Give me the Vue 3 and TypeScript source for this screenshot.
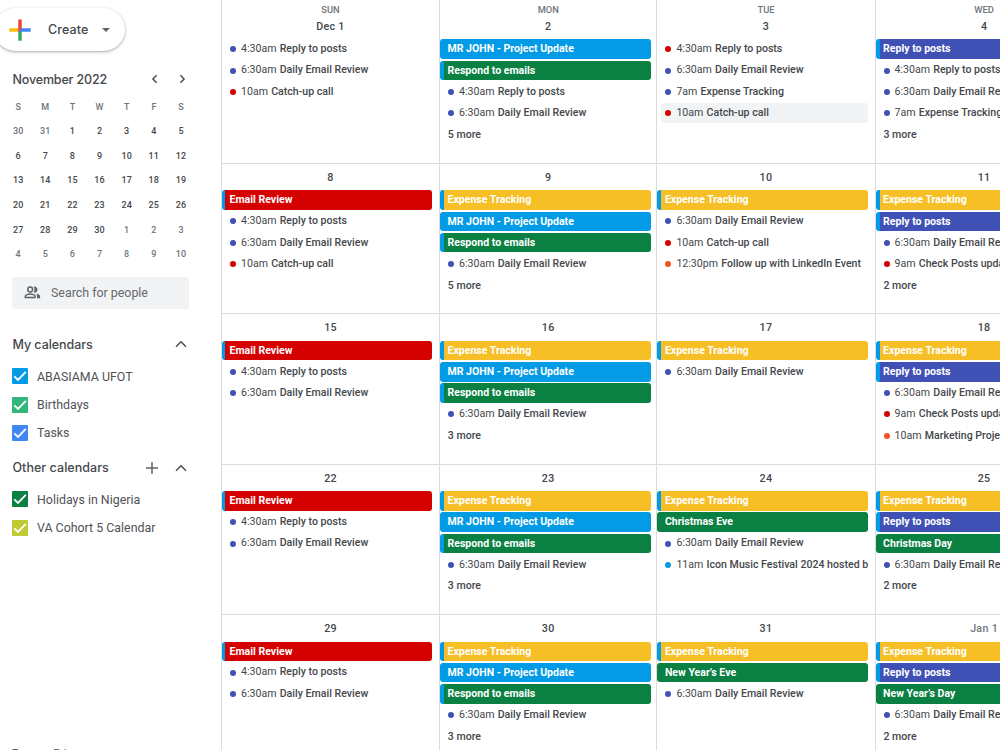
<script setup lang="ts">
type Tone = 'blue' | 'green' | 'indigo' | 'red' | 'yellow' | 'orange'

interface CalendarEvent {
  kind: 'bar' | 'timed'
  title: string
  tone: Tone
  time?: string
  striped?: boolean
  hovered?: boolean
}

interface DayCell {
  label: string
  events: CalendarEvent[]
  more?: number
  faded?: boolean
}

const bar = (title: string, tone: Tone, striped = true): CalendarEvent => ({ kind: 'bar', title, tone, striped })
const timed = (time: string, title: string, tone: Tone = 'indigo', hovered = false): CalendarEvent => ({
  kind: 'timed', time, title, tone, hovered,
})

const expense = bar('Expense Tracking', 'yellow')
const project = bar('MR JOHN - Project Update', 'blue')
const respond = bar('Respond to emails', 'green')
const review = bar('Email Review', 'red')
const reply = bar('Reply to posts', 'indigo')
const replyTimed = timed('4:30am', 'Reply to posts')
const daily = timed('6:30am', 'Daily Email Review')
const catchUp = timed('10am', 'Catch-up call', 'red')

const weekdays: string[] = ['SUN', 'MON', 'TUE', 'WED']

const weeks: DayCell[][] = [
  [
    { label: 'Dec 1', events: [replyTimed, daily, catchUp] },
    { label: '2', events: [project, respond, replyTimed, daily], more: 5 },
    {
      label: '3',
      events: [
        timed('4:30am', 'Reply to posts', 'red'),
        daily,
        timed('7am', 'Expense Tracking'),
        timed('10am', 'Catch-up call', 'red', true),
      ],
    },
    { label: '4', events: [reply, replyTimed, daily, timed('7am', 'Expense Tracking')], more: 3 },
  ],
  [
    { label: '8', events: [review, replyTimed, daily, catchUp] },
    { label: '9', events: [expense, project, respond, daily], more: 5 },
    { label: '10', events: [expense, daily, catchUp, timed('12:30pm', 'Follow up with LinkedIn Event', 'orange')] },
    { label: '11', events: [expense, reply, daily, timed('9am', 'Check Posts updates', 'red')], more: 2 },
  ],
  [
    { label: '15', events: [review, replyTimed, daily] },
    { label: '16', events: [expense, project, respond, daily], more: 3 },
    { label: '17', events: [expense, daily] },
    {
      label: '18',
      events: [expense, reply, daily, timed('9am', 'Check Posts updates', 'red'), timed('10am', 'Marketing Project', 'orange')],
    },
  ],
  [
    { label: '22', events: [review, replyTimed, daily] },
    { label: '23', events: [expense, project, respond, daily], more: 3 },
    {
      label: '24',
      events: [expense, bar('Christmas Eve', 'green', false), daily, timed('11am', 'Icon Music Festival 2024 hosted by', 'blue')],
    },
    { label: '25', events: [expense, reply, bar('Christmas Day', 'green', false), daily], more: 2 },
  ],
  [
    { label: '29', events: [review, replyTimed, daily] },
    { label: '30', events: [expense, project, respond, daily], more: 3 },
    { label: '31', events: [expense, bar('New Year’s Eve', 'green', false), daily] },
    { label: 'Jan 1', faded: true, events: [expense, reply, bar('New Year’s Day', 'green', false), daily], more: 2 },
  ],
]

const miniHeads: string[] = ['S', 'M', 'T', 'W', 'T', 'F', 'S']
const miniDays = Array.from({ length: 42 }, (_, i) => {
  const n = i - 1
  if (n < 1) return { n: n + 31, out: true }
  if (n > 30) return { n: n - 30, out: true }
  return { n, out: false }
})

const myCalendars = [
  { name: 'ABASIAMA UFOT', color: '#039be5' },
  { name: 'Birthdays', color: '#33b679' },
  { name: 'Tasks', color: '#4285f4' },
]
const otherCalendars = [
  { name: 'Holidays in Nigeria', color: '#0b8043' },
  { name: 'VA Cohort 5 Calendar', color: '#c0ca33' },
]
</script>

<template>
  <div class="page">
    <aside class="sidebar">
      <button class="create">
        <svg class="plus" viewBox="0 0 22 22">
          <path d="M9.3 0.5h3.4v8.8L9.3 12.7z" fill="#ea4335" />
          <path d="M9.3 9.3v3.4H0.3V9.3z" fill="#fbbc04" />
          <path d="M9.3 12.7L12.7 9.3v12.4H9.3z" fill="#34a853" />
          <path d="M12.7 9.3h9v3.4H9.3z" fill="#4285f4" />
          <path d="M9.3 9.3h3.4L9.3 12.7z" fill="#ea4335" />
        </svg>
        <span class="create-text">Create</span>
        <svg class="caret" viewBox="0 0 8 4"><path d="M0 0h8L4 4z" fill="#5f6368" /></svg>
      </button>

      <div class="mini-title">
        <span class="heading">November 2022</span>
        <svg class="arrow" viewBox="0 0 10 10"><path d="M6.6 1.2L2.9 5l3.7 3.8" /></svg>
        <svg class="arrow" viewBox="0 0 10 10"><path d="M3.4 1.2L7.1 5 3.4 8.8" /></svg>
      </div>
      <div class="mini">
        <span v-for="(h, i) in miniHeads" :key="'h' + i" class="mini-head">{{ h }}</span>
        <span v-for="(d, i) in miniDays" :key="i" class="mini-day" :class="{ out: d.out }">{{ d.n }}</span>
      </div>

      <div class="search">
        <svg class="people" viewBox="0 0 18 14">
          <g fill="none" stroke="#5f6368" stroke-width="1.6">
            <circle cx="6.5" cy="3.8" r="2.6" />
            <path d="M1.3 12.3v-1.2c0-1.5 3-2.5 5.2-2.5s5.2 1 5.2 2.5v1.2z" />
          </g>
          <path d="M10.2 0.6c2-.7 4.2.9 4.2 3.2s-2.2 3.9-4.2 3.2c1.3-1.9 1.3-4.5 0-6.4zM13 8.1c2 .4 4.2 1.4 4.2 3.1v1.9h-3.3v-1.9c0-1.3-.4-2.3-.9-3.1z" fill="#5f6368" />
        </svg>
        <span>Search for people</span>
      </div>

      <div class="section first">
        <span class="heading">My calendars</span>
        <svg class="chev" viewBox="0 0 12 8"><path d="M1 6.7L6 1.7l5 5" /></svg>
      </div>
      <div v-for="c in myCalendars" :key="c.name" class="cal">
        <svg class="check" viewBox="0 0 16 16">
          <rect width="16" height="16" rx="1" :fill="c.color" />
          <path d="M2.3 8.3l3.7 3.6 7.8-8" />
        </svg>
        <span>{{ c.name }}</span>
      </div>
      <div class="section second">
        <span class="heading">Other calendars</span>
        <svg class="add" viewBox="0 0 12 12"><path d="M6 0v12M0 6h12" /></svg>
        <svg class="chev" viewBox="0 0 12 8"><path d="M1 6.7L6 1.7l5 5" /></svg>
      </div>
      <div v-for="c in otherCalendars" :key="c.name" class="cal">
        <svg class="check" viewBox="0 0 16 16">
          <rect width="16" height="16" rx="1" :fill="c.color" />
          <path d="M2.3 8.3l3.7 3.6 7.8-8" />
        </svg>
        <span>{{ c.name }}</span>
      </div>
      <div class="footer">Terms – Privacy</div>
    </aside>

    <main class="month">
      <section v-for="(week, w) in weeks" :key="w" class="week" :class="{ top: w === 0 }">
        <div v-for="(day, d) in week" :key="d" class="day">
          <div v-if="w === 0" class="weekday">{{ weekdays[d] }}</div>
          <div class="date" :class="{ faded: day.faded }">{{ day.label }}</div>
          <div class="events">
            <template v-for="(e, i) in day.events" :key="i">
              <div v-if="e.kind === 'bar'" class="event bar" :class="[e.tone, { striped: e.striped }]">{{ e.title }}</div>
              <div v-else class="event timed" :class="{ hovered: e.hovered }">
                <i class="dot" :class="e.tone"></i>
                <span class="time">{{ e.time }}</span>
                <span class="name">{{ e.title }}</span>
              </div>
            </template>
            <div v-if="day.more" class="event more">{{ day.more }} more</div>
          </div>
        </div>
      </section>
    </main>
  </div>
</template>

<style>
body {
  overflow: hidden;
  background: #fff;
}
</style>

<style scoped>
.page {
  display: flex;
  width: 1000px;
  height: 750px;
  overflow: hidden;
  font-family: Roboto, "Liberation Sans", sans-serif;
  color: #44474b;
}
.sidebar {
  flex: none;
  width: 221px;
  height: 750px;
  overflow: hidden;
  display: flex;
  flex-direction: column;
}
.sidebar > * {
  flex: none;
}
.create {
  display: flex;
  align-items: center;
  margin: 8px 0 0 -6px;
  width: 131px;
  height: 43px;
  padding: 0 0 0 14.5px;
  border: 0;
  border-radius: 22px;
  background: #fff;
  box-shadow: 0 1px 2px rgba(60, 64, 67, 0.3), 0 1px 3px 1px rgba(60, 64, 67, 0.13);
  color: #44474b;
}
.plus {
  width: 22px;
  height: 22px;
}
.create-text {
  margin-left: 17.5px;
  width: 54px;
  text-align: left;
  font: 500 12.5px Inter, sans-serif;
  letter-spacing: 0.1px;
}
.caret {
  width: 8px;
  height: 4px;
}
.heading {
  font: 500 12.5px Inter, sans-serif;
  letter-spacing: -0.05px;
  flex: 1;
}
.mini-title {
  display: flex;
  align-items: center;
  height: 28px;
  margin: 14px 0 1.5px;
  padding: 0 34px 0 12.5px;
}
.mini-title .heading {
  letter-spacing: -0.16px;
}
.section.second .heading {
  letter-spacing: 0.04px;
}
.arrow {
  width: 10px;
  height: 10px;
  margin-left: 17px;
}
.arrow path,
.chev path {
  fill: none;
  stroke: #4b4e52;
  stroke-width: 1.5;
}
.mini {
  display: grid;
  grid-template-columns: repeat(7, 27.15px);
  grid-auto-rows: 24.65px;
  margin-left: 4.6px;
  text-align: center;
  line-height: 24.5px;
}
.mini-head {
  font-size: 9px;
  font-weight: 500;
  color: #70757a;
}
.mini-day {
  font-size: 9px;
  font-weight: 500;
  letter-spacing: 0.15px;
}
.mini-day.out {
  color: #70757a;
}
.search {
  display: flex;
  align-items: center;
  width: 177px;
  height: 32px;
  margin: 9.8px 0 0 12px;
  padding-left: 12px;
  box-sizing: border-box;
  border-radius: 3px;
  background: #f1f3f4;
  color: #66696e;
  font-size: 12.4px;
}
.people {
  width: 17px;
  height: 13px;
  margin-right: 10px;
}
.section {
  display: flex;
  align-items: center;
  height: 28px;
  padding: 0 34.5px 0 12.5px;
}
.section.first {
  margin: 21.5px 0 4px;
}
.section.second {
  margin: 7px 0 3.5px;
}
.chev {
  width: 12px;
  height: 8px;
}
.add {
  width: 12px;
  height: 12px;
  margin-right: 17px;
}
.add path {
  stroke: #5f6368;
  stroke-width: 1.5;
}
.cal {
  display: flex;
  align-items: center;
  height: 28.2px;
  padding-left: 11.5px;
  font-size: 12.4px;
  color: #505357;
}
.check {
  width: 16px;
  height: 16px;
  margin-right: 9.5px;
}
.check path {
  fill: none;
  stroke: #fff;
  stroke-width: 1.8;
}
.sidebar > .footer {
  margin: auto 0 -11px 12px;
  height: 14px;
  line-height: 14px;
  font-size: 10.5px;
}
.month {
  flex: 1;
  min-width: 0;
  overflow: hidden;
}
.week {
  display: grid;
  grid-template-columns: 218px 217.4px 218.2px 218px;
  height: 150.4px;
  box-sizing: border-box;
  border-top: 1px solid #dadce0;
  width: 872px;
}
.week.top {
  height: 163px;
  border-top: 0;
}
.day {
  border-left: 1px solid #dadce0;
  min-width: 0;
}
.weekday {
  height: 14px;
  padding-top: 3.4px;
  line-height: 14px;
  text-align: center;
  font-size: 9.3px;
  font-weight: 500;
  color: #70757a;
}
.date {
  height: 26.4px;
  line-height: 27.4px;
  text-align: center;
  font-size: 10.7px;
  font-weight: 500;
  letter-spacing: 0.3px;
}
.top .date {
  height: 22.1px;
  line-height: 20px;
}
.date.faded {
  color: #70757a;
}
.event {
  box-sizing: border-box;
  width: 210.5px;
  height: 19.5px;
  margin-bottom: 1.8px;
  line-height: 20.3px;
  font-size: 10.6px;
  font-weight: 500;
  white-space: nowrap;
  overflow: hidden;
  border-radius: 3px;
}
.day:first-child .event {
  width: 210px;
}
.bar {
  padding-left: 7.5px;
  color: #fff;
  font-weight: 700;
  font-size: 10.55px;
}
.striped {
  border-left: 4px solid #039be5;
  padding-left: 3.5px;
}
.day:first-child .striped {
  border-left-width: 3px;
  padding-left: 4.5px;
}
.timed,
.day:first-child .timed {
  display: flex;
  align-items: center;
  width: 206.5px;
  margin-left: 4px;
  padding-left: 4px;
}
.hovered {
  background: #f1f3f4;
}
.dot {
  flex: none;
  width: 6px;
  height: 6px;
  border-radius: 50%;
  margin-right: 5px;
}
.time {
  font-weight: 400;
  margin-right: 3.2px;
}
.more {
  padding-left: 7.8px;
}
.blue { background: #039be5; }
.green { background: #0b8043; }
.indigo { background: #3f51b5; }
.red { background: #d50000; }
.yellow { background: #f6bf26; }
.orange { background: #f4511e; }
</style>
